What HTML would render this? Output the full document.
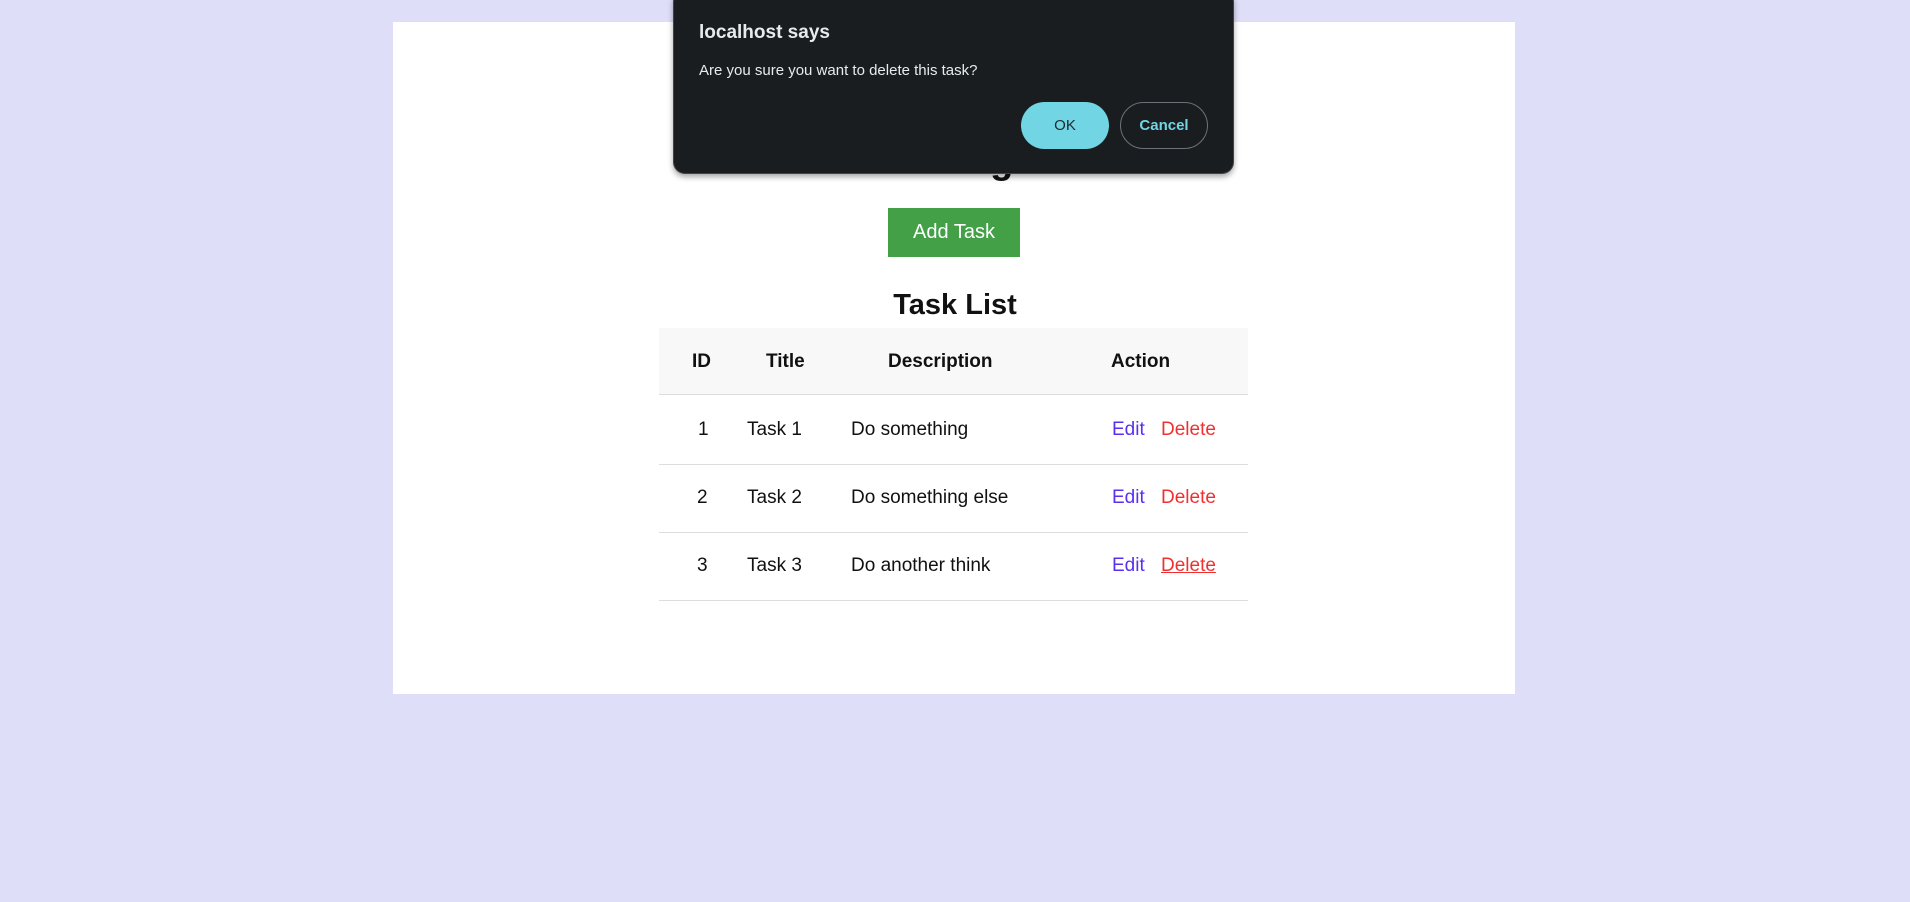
<!DOCTYPE html>
<html><head><meta charset="utf-8"><style>
*{margin:0;padding:0;box-sizing:border-box}
body{width:1910px;height:902px;background:#dedef9;position:relative;overflow:hidden;font-family:"Liberation Sans",sans-serif}
.panel{position:absolute;left:393px;top:22px;width:1122px;height:672px;background:#fff}
.abs{position:absolute;white-space:nowrap}
.btn{position:absolute;left:888px;top:208px;width:132px;height:49px;background:#43a047;color:#fff;font-size:20px;text-align:center;line-height:49px}
.h2{left:0;width:1910px;top:289px;text-align:center;font-size:29px;font-weight:bold;color:#111}
.thead{position:absolute;left:659px;top:328px;width:589px;height:67px;background:#f8f8f8;border-bottom:1px solid #ddd}
.line{position:absolute;left:659px;width:589px;height:1px;background:#ddd}
.th{font-size:19px;font-weight:bold;color:#111;top:351px}
.td{font-size:19px;color:#111}
.e{color:#5a2ff0}.d{color:#f03030}
.dlg{position:absolute;left:673px;top:-10px;width:561px;height:184px;background:#191d20;border-radius:12px;box-shadow:0 3px 6px rgba(0,0,0,.35);border:1px solid #444}
</style></head><body>
<div class="panel"></div>
<div class="abs" style="left:-31px;width:1910px;top:140px;text-align:center;font-size:38px;font-weight:bold;color:#111">Task Manager</div>
<div class="btn">Add Task</div>
<div class="abs h2">Task List</div>
<div class="thead"></div>
<div class="line" style="top:464px"></div>
<div class="line" style="top:532px"></div>
<div class="line" style="top:600px"></div>
<div class="abs th" style="left:692px">ID</div>
<div class="abs th" style="left:766px">Title</div>
<div class="abs th" style="left:888px">Description</div>
<div class="abs th" style="left:1111px">Action</div>

<div class="abs td" style="left:698px;top:419px">1</div>
<div class="abs td" style="left:747px;top:419px">Task 1</div>
<div class="abs td" style="left:851px;top:419px">Do something</div>
<div class="abs td e" style="left:1112px;top:419px">Edit</div>
<div class="abs td d" style="left:1161px;top:419px">Delete</div>

<div class="abs td" style="left:697px;top:487px">2</div>
<div class="abs td" style="left:747px;top:487px">Task 2</div>
<div class="abs td" style="left:851px;top:487px">Do something else</div>
<div class="abs td e" style="left:1112px;top:487px">Edit</div>
<div class="abs td d" style="left:1161px;top:487px">Delete</div>

<div class="abs td" style="left:697px;top:555px">3</div>
<div class="abs td" style="left:747px;top:555px">Task 3</div>
<div class="abs td" style="left:851px;top:555px">Do another think</div>
<div class="abs td e" style="left:1112px;top:555px">Edit</div>
<div class="abs td d" style="left:1161px;top:555px;text-decoration:underline">Delete</div>

<div class="dlg"></div>
<div class="abs" style="left:699px;top:22px;font-size:19px;color:#e8eaed;font-weight:bold">localhost says</div>
<div class="abs" style="left:699px;top:62px;font-size:15px;color:#e8eaed">Are you sure you want to delete this task?</div>
<div class="abs" style="left:1021px;top:102px;width:88px;height:47px;border-radius:24px;background:#72d5e3;color:#1b2a30;font-size:15px;text-align:center;line-height:47px">OK</div>
<div class="abs" style="left:1120px;top:102px;width:88px;height:47px;border-radius:24px;border:1px solid #6b7378;color:#72d5e3;font-size:15px;font-weight:bold;text-align:center;line-height:45px">Cancel</div>
</body></html>
